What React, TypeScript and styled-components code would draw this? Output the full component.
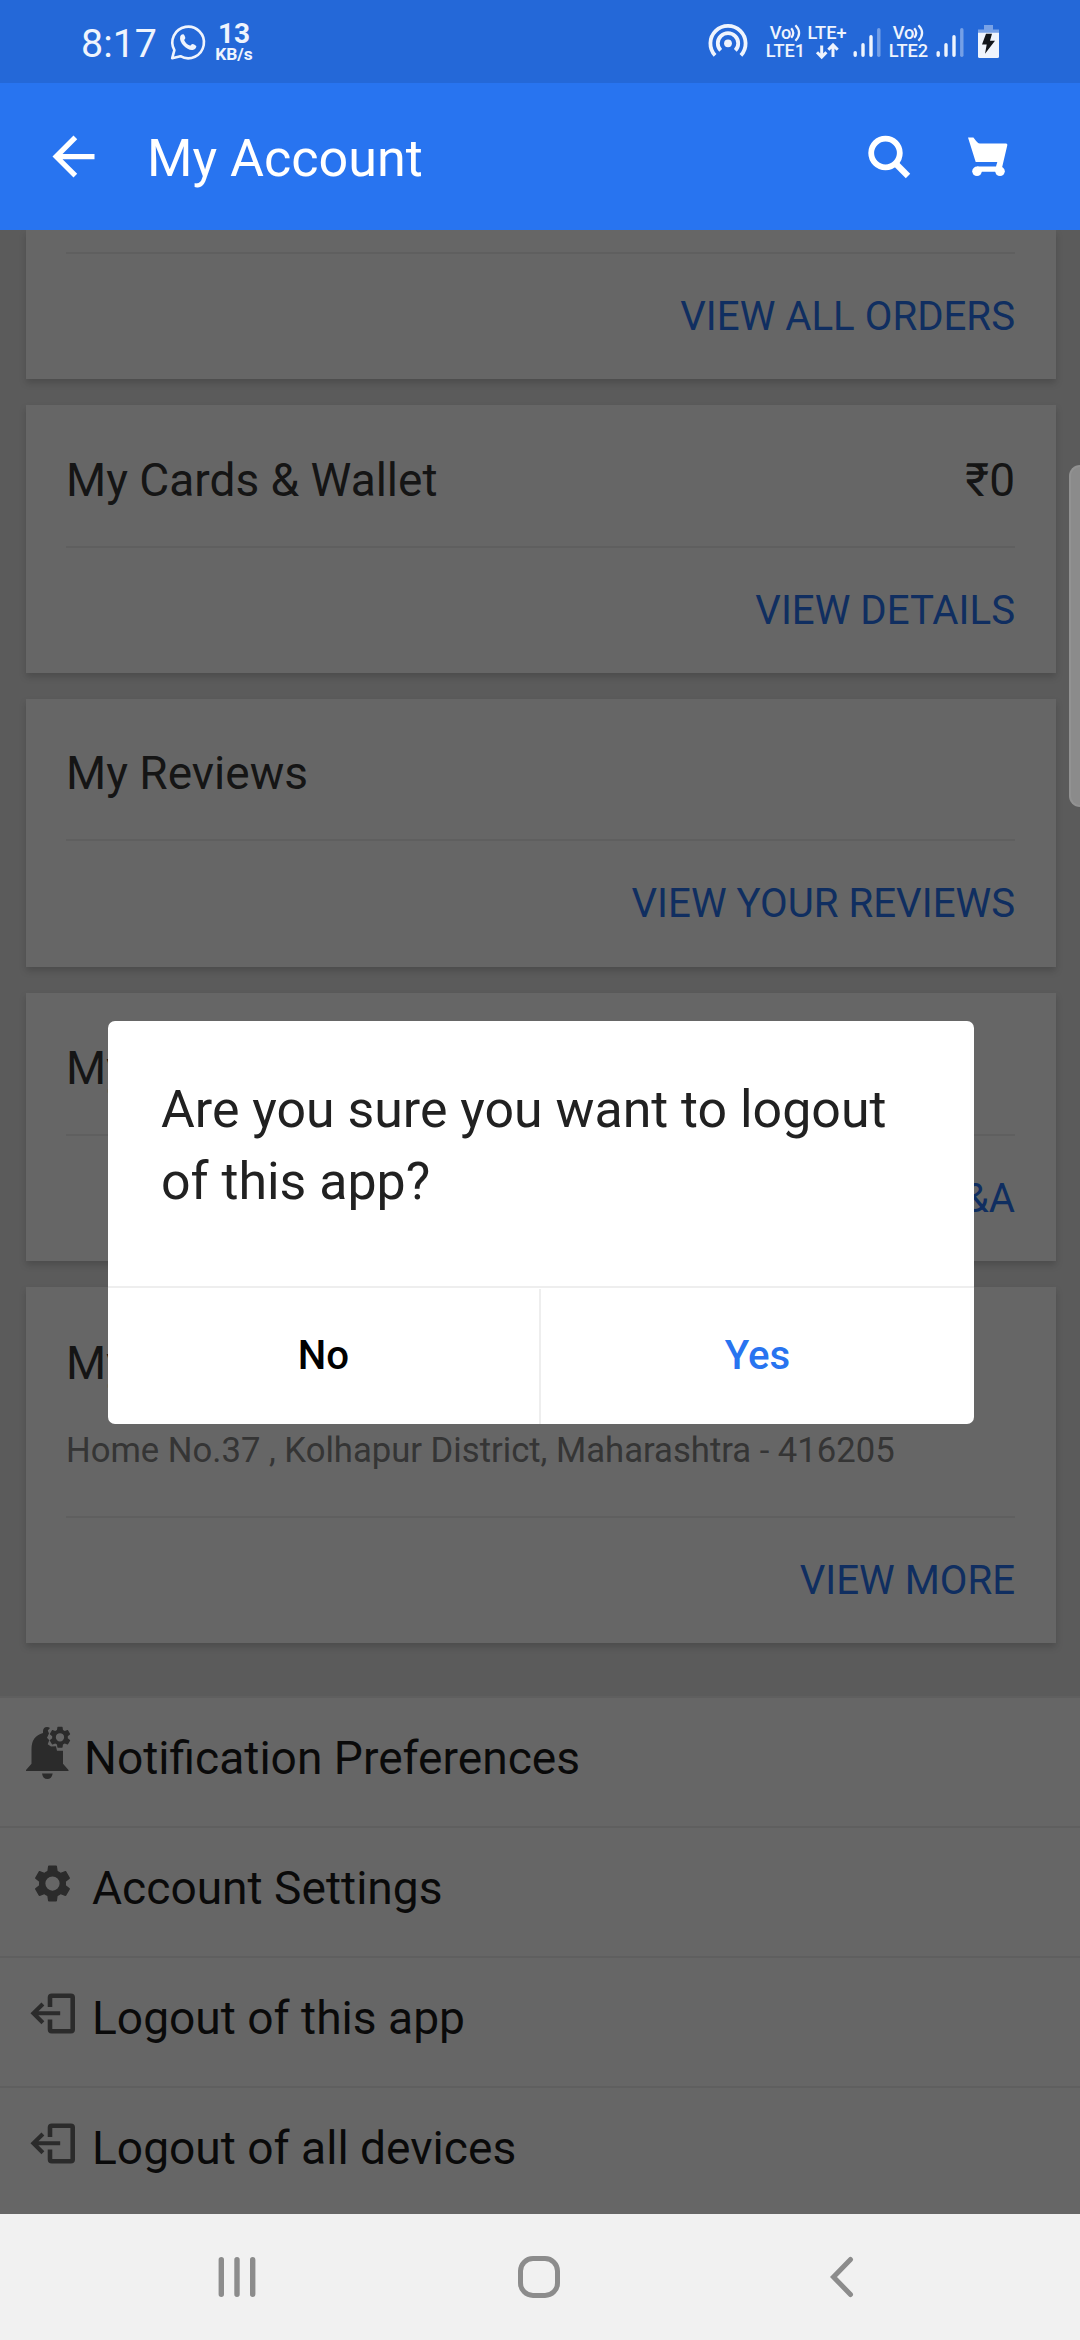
import React from "react";
import styled, { createGlobalStyle } from "styled-components";

const GlobalStyle = createGlobalStyle`
  *, *::before, *::after { box-sizing: border-box; }
  body { margin: 0; font-family: Roboto, "Noto Sans", sans-serif; }
  svg { display: block; flex: none; overflow: visible; }
`;

const Screen = styled.div`
  width: 1080px;
  height: 2340px;
  display: flex;
  flex-direction: column;
  overflow: hidden;
  background: #f1f1f1;
`;

/* Status bar */

const StatusBar = styled.header`
  height: 83px;
  padding: 0 81px;
  display: flex;
  justify-content: space-between;
  background: #2468d8;
  color: #eff4fd;
`;

const StatusGroup = styled.div`
  display: flex;
  align-items: flex-start;
  padding-top: 22px;
`;

const Clock = styled.span`
  width: 76px;
  font-size: 39.4px;
  line-height: 43px;
  white-space: nowrap;
`;

const Speed = styled.div`
  width: 38px;
  margin-left: 9px;
  display: flex;
  flex-direction: column;
  align-items: center;
  font-weight: 700;
`;

const SpeedValue = styled.span`
  font-size: 28px;
  line-height: 23px;
`;

const SpeedUnit = styled.span`
  font-size: 17.4px;
  line-height: 18px;
`;

const IconSlot = styled.div<{ $left: number; $top?: number }>`
  margin-left: ${(p) => p.$left}px;
  margin-top: ${(p) => p.$top ?? 0}px;
`;

const Carrier = styled.div<{ $width: number; $left: number }>`
  width: ${(p) => p.$width}px;
  margin-left: ${(p) => p.$left}px;
  padding-top: 2px;
  display: flex;
  flex-direction: column;
  align-items: center;
  font-size: 18.2px;
  font-weight: 500;
  line-height: 18px;
  white-space: nowrap;
`;

const CarrierLine = styled.div`
  height: 18px;
  display: flex;
  align-items: center;
`;

/* Toolbar */

const AppBar = styled.nav`
  height: 147px;
  padding: 0 72px 0 42px;
  display: flex;
  align-items: center;
  background: #2874f0;
  color: #fff;
`;

const AppTitle = styled.h1`
  flex: 1;
  margin: 4px 0 0 42px;
  font-size: 52.1px;
  font-weight: 400;
  line-height: 64px;
`;

const ToolIcons = styled.div`
  display: flex;
  gap: 57px;
  align-items: center;
`;

/* Page */

const Body = styled.main`
  position: relative;
  height: 1984px;
  overflow: hidden;
`;

const Page = styled.div`
  height: 100%;
  display: flex;
  flex-direction: column;
  background: #e3e3e3;
`;

const Cards = styled.div`
  display: flex;
  flex-direction: column;
  gap: 26px;
  padding: 0 24px 53px 26px;
`;

const Card = styled.section`
  padding: 0 41px 0 40px;
  background: #fff;
  box-shadow: 0 4px 7px rgba(0, 0, 0, 0.17);
`;

const CardHead = styled.div<{ $height: number; $top: number }>`
  height: ${(p) => p.$height}px;
  padding-top: ${(p) => p.$top}px;
  border-bottom: 2px solid #eee;
  color: #353535;
  font-size: 46px;
`;

const CardTitleRow = styled.div`
  display: flex;
  justify-content: space-between;
  line-height: 132px;
`;

const Address = styled.p`
  margin: -6px 0 0;
  color: #848484;
  font-size: 34.65px;
  line-height: 54px;
  white-space: nowrap;
`;

const CardLink = styled.div<{ $height: number }>`
  height: ${(p) => p.$height}px;
  text-align: right;
  color: #2874f0;
  font-size: 40.2px;
  line-height: 125px;
`;

const Options = styled.div`
  flex: 1;
  background: #fff;
`;

const Option = styled.div<{ $inset: number; $text: number }>`
  height: 130px;
  padding-left: ${(p) => p.$inset}px;
  display: grid;
  grid-template-columns: ${(p) => p.$text - p.$inset}px 1fr;
  border-top: 2px solid #eee;
  color: #1b1b1b;
  font-size: 46.13px;
  line-height: 121px;
`;

const OptionIcon = styled.div<{ $top: number }>`
  padding-top: ${(p) => p.$top}px;
  color: #6b6b6b;
`;

/* Dialog */

const Scrim = styled.div`
  position: absolute;
  inset: 0;
  padding-top: 1px;
  display: flex;
  align-items: center;
  justify-content: center;
  background: rgba(0, 0, 0, 0.6);
`;

const Dialog = styled.div`
  width: 866px;
  height: 403px;
  margin-left: 2px;
  display: flex;
  flex-direction: column;
  overflow: hidden;
  border-radius: 7px;
  background: #fff;
`;

const Question = styled.p`
  flex: 1;
  margin: 0;
  padding: 53px 53px 0;
  color: #212121;
  font-size: 51.86px;
  line-height: 72px;
`;

const Actions = styled.div`
  height: 138px;
  padding-top: 1px;
  display: grid;
  grid-template-columns: 433px 1fr;
  border-top: 2px solid #eee;
`;

const Action = styled.button<{ $color: string; $divided?: boolean }>`
  margin: 0;
  padding: 0 0 3px;
  border: 0;
  border-right: ${(p) => (p.$divided ? "2px solid #eee" : "0")};
  background: transparent;
  color: ${(p) => p.$color};
  font-family: inherit;
  font-size: 40.2px;
  font-weight: 500;
`;

const ScrollThumb = styled.div`
  position: absolute;
  top: 235px;
  right: 0;
  width: 11px;
  height: 342px;
  border: 2px solid #929292;
  border-right: 0;
  border-radius: 11px 0 0 11px;
  background: #8b8b8b;
`;

/* System navigation */

const NavBar = styled.footer`
  height: 126px;
  padding-left: 218px;
  display: flex;
  align-items: center;
  background: #f1f1f1;
  color: #8c8c8c;
`;

const GEAR =
  "M19.14 12.94c.04-.3.06-.61.06-.94 0-.32-.02-.64-.07-.94l2.03-1.58c.18-.14.23-.41.12-.61l-1.92-3.32c-.12-.22-.37-.29-.59-.22l-2.39.96c-.5-.38-1.03-.7-1.62-.94L14.4 2.81c-.04-.24-.24-.41-.48-.41h-3.84c-.24 0-.43.17-.47.41L9.25 5.35C8.66 5.59 8.12 5.92 7.63 6.29L5.24 5.33c-.22-.08-.47 0-.59.22L2.74 8.87c-.12.21-.08.47.12.61l2.03 1.58C4.84 11.36 4.8 11.69 4.8 12s.02.64.07.94l-2.03 1.58c-.18.14-.23.41-.12.61l1.92 3.32c.12.22.37.29.59.22l2.39-.96c.5.38 1.03.7 1.62.94l.36 2.54c.05.24.24.41.48.41h3.84c.24 0 .44-.17.47-.41l.36-2.54c.59-.24 1.13-.56 1.62-.94l2.39.96c.22.08.47 0 .59-.22l1.92-3.32c.12-.22.07-.47-.12-.61l-2.01-1.58zM12 15.8a3.8 3.8 0 1 1 0-7.6 3.8 3.8 0 0 1 0 7.6z";

const WhatsAppIcon = () => (
  <svg width="36" height="36" viewBox="0 0 36 36">
    <path
      d="M2.2 34.2 4.4 26.2A15.8 15.8 0 1 1 10.4 32.2Z"
      fill="none"
      stroke="currentColor"
      strokeWidth="2.6"
      strokeLinejoin="round"
    />
    <path
      d="M10.2 12.4c.9-2 2.6-2.5 3.6-1.8.8 1 1.4 2.4 1.5 3.4-.1 1-1.2 1.6-1 2.4 1.4 2.6 3 4.2 5.6 5.2 1 .2 1.5-1.7 2.6-1.7 1.4.4 3 1.2 3.8 2 .1 2.6-2.4 4-4.4 4-3 0-5.6-1.6-8.2-4.2-2.6-2.6-4.3-6.1-3.5-9.3z"
      fill="currentColor"
    />
  </svg>
);

const HotspotIcon = () => (
  <svg width="40" height="36" viewBox="0 0 40 36">
    <g fill="none" stroke="currentColor" strokeWidth="3.8">
      <path d="M7.1 33.4A17.6 17.6 0 1 1 32.9 33.4" />
      <path d="M12.7 28.4A10.2 10.2 0 1 1 27.3 28.4" />
    </g>
    <circle cx="20" cy="21.3" r="3.9" fill="currentColor" />
  </svg>
);

const WaveIcon = () => (
  <svg width="10" height="18" viewBox="0 0 10 18">
    <g fill="none" stroke="currentColor" strokeWidth="2.2">
      <path d="M.2 4.2Q4.4 9 .2 13.8" />
      <path d="M4.4 1.2Q11.8 9 4.4 16.8" />
    </g>
  </svg>
);

const DataArrows = () => (
  <svg width="23" height="16" viewBox="0 0 23 16">
    <path
      d="M5.7 2.5V14M1 9.2l4.7 4.8 4.7-4.8M17 14V2M12.3 6.8 17 2l4.7 4.8"
      fill="none"
      stroke="currentColor"
      strokeWidth="3"
    />
  </svg>
);

const SignalIcon = () => (
  <svg width="28" height="31" viewBox="0 0 28 31">
    <g stroke="currentColor" strokeWidth="3.4" strokeLinecap="round">
      <path d="M2.2 25.6V28.3M10 17.7V28.3M18 9.7V28.3" />
      <path d="M25.8 2.7V28.3" opacity=".4" />
    </g>
  </svg>
);

const BatteryIcon = () => (
  <svg width="21" height="33" viewBox="0 0 21 33">
    <path d="M6 0h9v4.5h6V8H0V4.5h6z" fill="currentColor" opacity=".42" />
    <path d="M0 7.7H21V31.5q0 1.5-1.5 1.5h-18Q0 33 0 31.5z" fill="currentColor" />
    <path d="M8 8.7h6l-2 7h5L7 28.7l1.7-9.2H4z" fill="#12161c" />
  </svg>
);

const BackArrow = () => (
  <svg width="63" height="63" viewBox="0 0 24 24" fill="currentColor">
    <path d="M20 11H7.83l5.59-5.59L12 4l-8 8 8 8 1.41-1.41L7.83 13H20v-2z" />
  </svg>
);

const SearchIcon = () => (
  <svg width="44" height="44" viewBox="0 0 44 44" fill="none" stroke="currentColor">
    <circle cx="18.5" cy="18" r="14.3" strokeWidth="5.8" />
    <path d="M28.6 28.5 41 41" strokeWidth="6.2" />
  </svg>
);

const CartIcon = () => (
  <svg width="40" height="40" viewBox="0 0 40 40" fill="currentColor">
    <path d="M0 .5H5.4Q8 4 9.6 5.6 10.4 6.5 12 6.5H38Q39.7 6.6 39.3 8.2L34.3 29.5 32.5 34.7H9V29.5H28L29.3 25H7.7Z" />
    <circle cx="9" cy="34.3" r="4.8" />
    <circle cx="32" cy="34.3" r="4.8" />
  </svg>
);

const BellGearIcon = () => (
  <svg width="46" height="53" viewBox="0 0 46 53" fill="currentColor">
    <path d="M0 43 5.5 36.8V22Q5.5 9 17 6V4Q17.3 0 21 0q1.8 0 3 1L21.8 3.5 23 6.5 21 10.7 23.3 13.3 21.7 17.3 25 19.5 30 19.3 31 23.7H37V36.8L42.5 43V44H0z" />
    <path d="M16 46.5H26.7Q25.7 52 21.3 52T16 46.5z" />
    <g transform="translate(20.9 -2.8) scale(1.09)">
      <path fillRule="evenodd" d={GEAR} />
    </g>
  </svg>
);

const GearIcon = () => (
  <svg width="45" height="45" viewBox="0 0 24 24" fill="currentColor">
    <path fillRule="evenodd" d={GEAR} />
  </svg>
);

const LogoutIcon = () => (
  <svg width="45" height="41" viewBox="0 0 45 41" fill="none" stroke="currentColor">
    <path
      d="M20 14V4.5Q20 2.7 21.8 2.7H40.9Q42.7 2.7 42.7 4.5V36.4Q42.7 38.2 40.9 38.2H21.8Q20 38.2 20 36.4V26.5"
      strokeWidth="4.6"
    />
    <path d="M30.2 20.3H3.4M12.9 11 3.4 20.3l9.5 9.4" strokeWidth="4.1" />
  </svg>
);

const RecentsIcon = () => (
  <svg width="38" height="42" viewBox="0 0 38 42">
    <path
      d="M3.3 3.8V38.2M19 3.8V38.2M34.7 3.8V38.2"
      stroke="currentColor"
      strokeWidth="5.4"
      strokeLinecap="round"
    />
  </svg>
);

const HomeIcon = () => (
  <svg width="42" height="42" viewBox="0 0 42 42">
    <rect x="2.5" y="2.5" width="37" height="37" rx="12.5" fill="none" stroke="currentColor" strokeWidth="5" />
  </svg>
);

const BackIcon = () => (
  <svg width="24" height="42" viewBox="0 0 24 42">
    <path
      d="M20.5 3.5 3.5 21 20.5 38.5"
      fill="none"
      stroke="currentColor"
      strokeWidth="5"
      strokeLinecap="round"
    />
  </svg>
);

interface AccountCard {
  title?: string;
  value?: string;
  address?: string;
  link: string;
  headHeight: number;
  headTop: number;
  linkHeight: number;
}

const cards: AccountCard[] = [
  { link: "VIEW ALL ORDERS", headHeight: 24, headTop: 0, linkHeight: 125 },
  {
    title: "My Cards & Wallet",
    value: "₹0",
    link: "VIEW DETAILS",
    headHeight: 143,
    headTop: 9,
    linkHeight: 125,
  },
  { title: "My Reviews", link: "VIEW YOUR REVIEWS", headHeight: 142, headTop: 8, linkHeight: 126 },
  { title: "My Q&A", link: "VIEW Q&A", headHeight: 143, headTop: 9, linkHeight: 125 },
  {
    title: "My Addresses",
    address: "Home No.37 , Kolhapur District, Maharashtra - 416205",
    link: "VIEW MORE",
    headHeight: 231,
    headTop: 10,
    linkHeight: 125,
  },
];

const options = [
  { label: "Notification Preferences", Icon: BellGearIcon, inset: 26, text: 84, top: 29 },
  { label: "Account Settings", Icon: GearIcon, inset: 29.5, text: 92, top: 33 },
  { label: "Logout of this app", Icon: LogoutIcon, inset: 30, text: 92, top: 35 },
  { label: "Logout of all devices", Icon: LogoutIcon, inset: 30, text: 92, top: 35 },
];

export default function App() {
  return (
    <>
      <GlobalStyle />
      <Screen>
        <StatusBar>
          <StatusGroup>
            <Clock>8:17</Clock>
            <IconSlot $left={13} $top={2}>
              <WhatsAppIcon />
            </IconSlot>
            <Speed>
              <SpeedValue>13</SpeedValue>
              <SpeedUnit>KB/s</SpeedUnit>
            </Speed>
          </StatusGroup>
          <StatusGroup>
            <IconSlot $left={0}>
              <HotspotIcon />
            </IconSlot>
            <Carrier $width={39} $left={18}>
              <CarrierLine>
                Vo
                <WaveIcon />
              </CarrierLine>
              <CarrierLine>LTE1</CarrierLine>
            </Carrier>
            <Carrier $width={38} $left={3}>
              <CarrierLine>LTE+</CarrierLine>
              <CarrierLine>
                <DataArrows />
              </CarrierLine>
            </Carrier>
            <IconSlot $left={7} $top={5}>
              <SignalIcon />
            </IconSlot>
            <Carrier $width={41} $left={7}>
              <CarrierLine>
                Vo
                <WaveIcon />
              </CarrierLine>
              <CarrierLine>LTE2</CarrierLine>
            </Carrier>
            <IconSlot $left={7} $top={5}>
              <SignalIcon />
            </IconSlot>
            <IconSlot $left={14} $top={3}>
              <BatteryIcon />
            </IconSlot>
          </StatusGroup>
        </StatusBar>
        <AppBar>
          <BackArrow />
          <AppTitle>My Account</AppTitle>
          <ToolIcons>
            <SearchIcon />
            <CartIcon />
          </ToolIcons>
        </AppBar>
        <Body>
          <Page>
            <Cards>
              {cards.map((card) => (
                <Card key={card.link}>
                  <CardHead $height={card.headHeight} $top={card.headTop}>
                    {card.title && (
                      <CardTitleRow>
                        <span>{card.title}</span>
                        {card.value && <span>{card.value}</span>}
                      </CardTitleRow>
                    )}
                    {card.address && <Address>{card.address}</Address>}
                  </CardHead>
                  <CardLink $height={card.linkHeight}>{card.link}</CardLink>
                </Card>
              ))}
            </Cards>
            <Options>
              {options.map(({ label, Icon, inset, text, top }) => (
                <Option key={label} $inset={inset} $text={text}>
                  <OptionIcon $top={top}>
                    <Icon />
                  </OptionIcon>
                  <span>{label}</span>
                </Option>
              ))}
            </Options>
          </Page>
          <Scrim>
            <Dialog role="dialog" aria-modal="true">
              <Question>Are you sure you want to logout of this app?</Question>
              <Actions>
                <Action $color="#000" $divided>
                  No
                </Action>
                <Action $color="#2874f0">Yes</Action>
              </Actions>
            </Dialog>
          </Scrim>
          <ScrollThumb />
        </Body>
        <NavBar>
          <RecentsIcon />
          <IconSlot $left={262}>
            <HomeIcon />
          </IconSlot>
          <IconSlot $left={270}>
            <BackIcon />
          </IconSlot>
        </NavBar>
      </Screen>
    </>
  );
}
